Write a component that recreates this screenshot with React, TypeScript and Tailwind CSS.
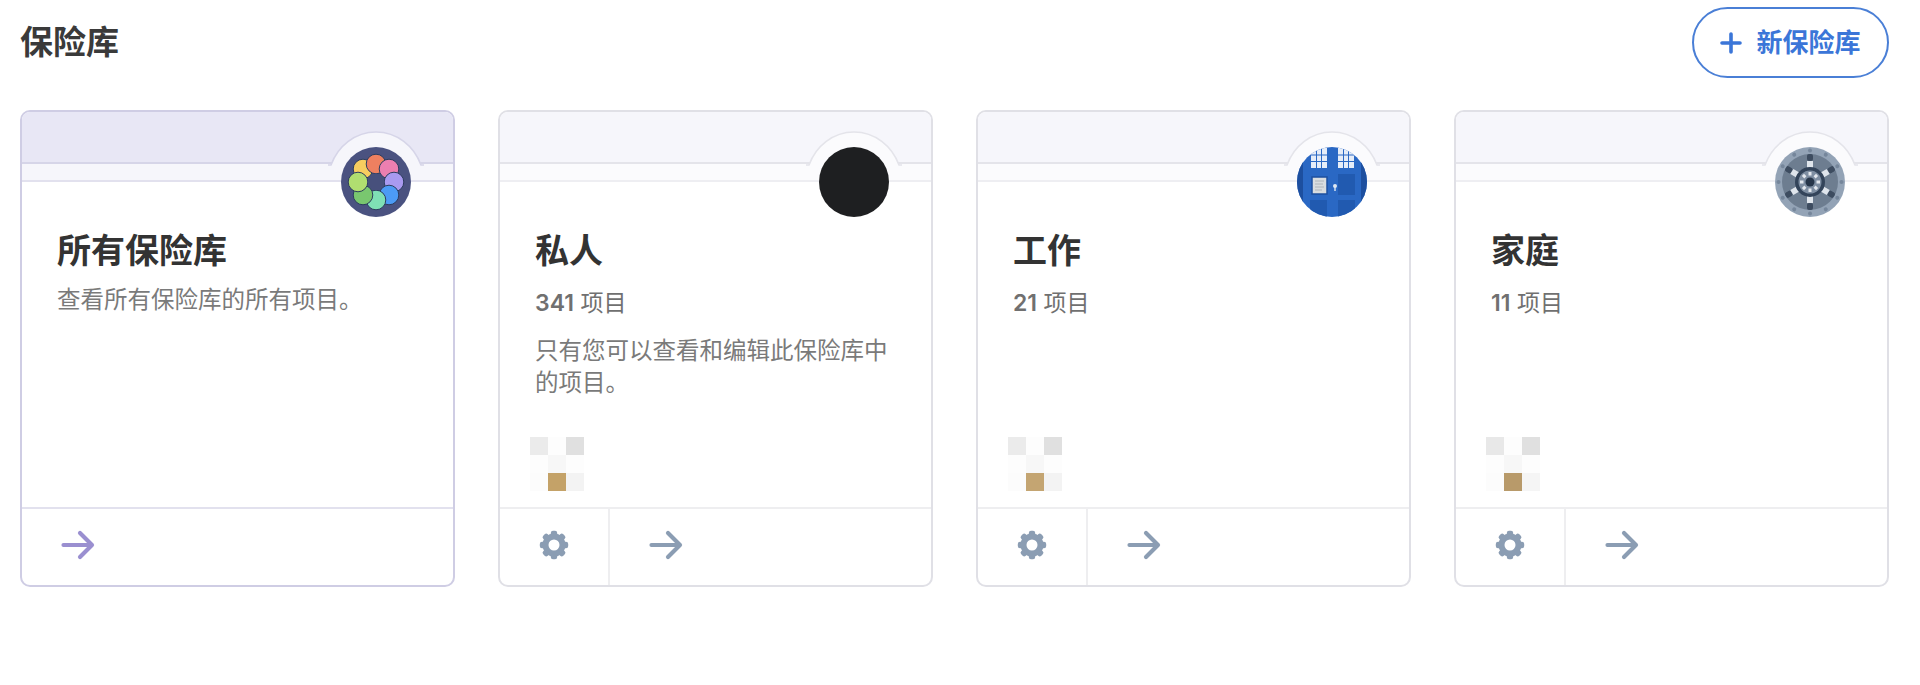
const Arrow = ({ className }: { className: string }) => (
  <svg viewBox="0 0 34 30" className={className} fill="none" stroke="currentColor" strokeWidth="4.2" strokeLinecap="round" strokeLinejoin="round">
    <path d="M2.500 15H31M19 3L31 15L19 27" />
  </svg>
);

const Gear = () => (
  <svg viewBox="0 0 30 30" className="h-[30px] w-[30px] text-[#8b9db3]" fill="currentColor">
    {[0, 45, 90, 135, 180, 225, 270, 315].map((a) => (
      <rect key={a} x="11.800" y="0.800" width="6.400" height="6" rx="2.200" transform={`rotate(${a} 15 15)`} />
    ))}
    <circle cx="15" cy="15" r="8.500" fill="none" stroke="currentColor" strokeWidth="6" />
  </svg>
);

const Arch = ({ fill, stroke }: { fill: string; stroke: string }) => (
  <svg viewBox="0 0 96 35" className="absolute left-[306px] top-[19px] h-[35px] w-[96px]">
    <path d="M0 34.500H3C10 15 27 1 48 1C69 1 86 15 93 34.500H96V35H0Z" fill={fill} stroke="none" />
    <path d="M0 34H3C10 15 27 1 48 1C69 1 86 15 93 34H96" fill="none" stroke={stroke} strokeWidth="1.600" />
  </svg>
);

const AllVaults = () => {
  const petals = [
    ["#f7cd5f", 22, 22],
    ["#ee8060", 35, 17],
    ["#ec7fb0", 48, 22],
    ["#a99af0", 53, 35],
    ["#4c9bf5", 48, 48],
    ["#7fe0b5", 35, 53],
    ["#79c76f", 22, 48],
    ["#b0de70", 17, 35],
  ] as const;
  return (
    <svg viewBox="0 0 70 70" className="h-full w-full">
      <circle cx="35" cy="35" r="35" fill="#4a5280" />
      {petals.map(([color, x, y]) => (
        <circle key={color} cx={x} cy={y} r="9.800" fill={color} stroke="#2c3c5e" strokeWidth="1" />
      ))}
      <circle cx="35" cy="35" r="8.500" fill="#47507c" />
    </svg>
  );
};

const Personal = () => (
  <svg viewBox="0 0 70 70" className="h-full w-full">
    <circle cx="35" cy="35" r="35" fill="#1e1f21" />
  </svg>
);

const Work = () => (
  <svg viewBox="0 0 70 70" className="h-full w-full">
    <defs>
      <clipPath id="doorClip">
        <circle cx="35" cy="35" r="35" />
      </clipPath>
    </defs>
    <g clipPath="url(#doorClip)">
      <rect width="70" height="70" fill="#2a68c4" />
      <rect x="0" width="6" height="70" fill="#1d4f9f" />
      <rect x="64" width="6" height="70" fill="#1d4f9f" />
      <rect x="14" y="1" width="16" height="20" fill="#e6edf8" />
      <rect x="41" y="1" width="16" height="20" fill="#e6edf8" />
      <path d="M19.500 1V21M24.500 1V21M14 8H30M14 14.500H30M46.500 1V21M51.500 1V21M41 8H57M41 14.500H57" stroke="#2a68c4" strokeWidth="1" />
      <rect x="15" y="30" width="15" height="17" fill="#d9dde0" stroke="#1d4f9f" strokeWidth="1.500" />
      <path d="M18 34H27M18 37H26M18 40H27M18 43H25" stroke="#a5adb3" strokeWidth="0.800" />
      <rect x="41" y="27" width="17" height="21" fill="#215ab0" />
      <rect x="13" y="53" width="17" height="17" fill="#215ab0" />
      <rect x="41" y="53" width="17" height="17" fill="#215ab0" />
      <circle cx="38" cy="39" r="2" fill="#dfe8f2" />
      <rect x="37.300" y="40" width="1.400" height="4" fill="#dfe8f2" />
    </g>
  </svg>
);

const Family = () => {
  const spokes = [0, 60, 120, 180, 240, 300];
  const dots = [0, 30, 60, 90, 120, 150, 180, 210, 240, 270, 300, 330];
  const inner = [0, 45, 90, 135, 180, 225, 270, 315];
  return (
    <svg viewBox="0 0 70 70" className="h-full w-full">
      <circle cx="35" cy="35" r="35" fill="#93a3b6" />
      {dots.map((a) => (
        <circle key={a} cx="35" cy="3.500" r="2" fill="#75869b" transform={`rotate(${a} 35 35)`} />
      ))}
      <circle cx="35" cy="35" r="28" fill="#6d7d90" />
      {spokes.map((a) => (
        <g key={a} transform={`rotate(${a} 35 35)`}>
          <rect x="32" y="7" width="6" height="7" rx="2" fill="#3d4c60" />
          <rect x="32" y="14" width="6" height="7" fill="#dfe5ec" />
        </g>
      ))}
      <circle cx="35" cy="35" r="15" fill="#33445a" />
      <circle cx="35" cy="35" r="11.500" fill="#7e8ea2" />
      {inner.map((a) => (
        <rect key={a} x="33.500" y="25" width="3" height="3.500" fill="#e3e8ee" transform={`rotate(${a} 35 35)`} />
      ))}
      <circle cx="35" cy="35" r="4.500" fill="#27364a" />
    </svg>
  );
};

type Vault = {
  name: string;
  count?: string;
  desc?: string;
  avatar: React.ReactNode;
  pixels?: string[];
};

const vaults: Vault[] = [
  { name: "所有保险库", desc: "查看所有保险库的所有项目。", avatar: <AllVaults /> },
  {
    name: "私人",
    count: "341",
    desc: "只有您可以查看和编辑此保险库中的项目。",
    avatar: <Personal />,
    pixels: ["#ebebeb", "#fdfdfd", "#e0e0e0", "#fdfdfd", "#f7f7f7", "#fdfdfd", "#fcfcfc", "#c4a268", "#f3f3f3"],
  },
  {
    name: "工作",
    count: "21",
    avatar: <Work />,
    pixels: ["#ebebeb", "#fdfdfd", "#e0e0e0", "#fdfdfd", "#f7f7f7", "#fdfdfd", "#fcfcfc", "#c4a572", "#f3f3f3"],
  },
  {
    name: "家庭",
    count: "11",
    avatar: <Family />,
    pixels: ["#e8e8e8", "#fdfdfd", "#e0e0e0", "#fdfdfd", "#f7f7f7", "#fdfdfd", "#fcfcfc", "#b89a6a", "#f5f5f5"],
  },
];

const VaultCard = ({ vault, all }: { vault: Vault; all: boolean }) => (
  <div className={`relative flex h-[477px] flex-col overflow-hidden rounded-[10px] border-2 bg-white ${all ? "border-[#cfcde4]" : "border-[#e0e0e6]"}`}>
    <div className={`h-[52px] shrink-0 border-b-2 ${all ? "border-[#d6d5e8] bg-[#e8e7f5]" : "border-[#e4e4ea] bg-[#f6f6fb]"}`} />
    <div className={`h-[18px] shrink-0 border-b-2 ${all ? "border-[#e2e1ee] bg-[#f6f6fb]" : "border-[#eeeef2] bg-[#fbfbfd]"}`} />
    <Arch fill={all ? "#f6f6fb" : "#fbfbfd"} stroke={all ? "#d6d5e8" : "#e4e4ea"} />
    <div className="absolute left-[319px] top-[35px] h-[70px] w-[70px]">{vault.avatar}</div>

    <div className="flex min-h-0 flex-1 flex-col px-[35px] pt-[46px]">
      <h2 className="text-[34px] leading-[46px] font-bold text-[#333333]">{vault.name}</h2>
      {vault.count && (
        <p className="mt-[13px] text-[23px] leading-[32px] text-[#707070]">
          <span className="font-semibold">{vault.count}</span> 项目
        </p>
      )}
      {vault.desc && (
        <p className={`text-[23.500px] leading-[32px] text-[#7a7a7a] ${vault.count ? "mt-[16px]" : "mt-[10px]"}`}>{vault.desc}</p>
      )}
      {vault.pixels && (
        <div className="mt-auto mb-[16px] -ml-[5px] grid w-[54px] grid-cols-3">
          {vault.pixels.map((color, i) => (
            <div key={i} className="h-[18px]" style={{ backgroundColor: color }} />
          ))}
        </div>
      )}
    </div>

    <div className={`flex h-[78px] shrink-0 border-t-2 pb-[4px] ${all ? "border-[#e2e1ee]" : "border-[#eeeef0]"}`}>
      {!all && (
        <div className="-mb-[4px] flex w-[110px] items-center justify-center border-r-2 border-[#eeeef0] pb-[4px]">
          <Gear />
        </div>
      )}
      <div className="flex items-center pl-[39px]">
        <Arrow className={`h-[30px] w-[34px] ${all ? "text-[#9a8fd0]" : "text-[#8b9db3]"}`} />
      </div>
    </div>
  </div>
);

export default function App() {
  return (
    <div className="h-[685px] w-full bg-white pr-[31px] pl-5 font-['Inter','Noto_Sans_CJK_SC',sans-serif]">
      <div className="flex h-[110px] items-start justify-between pt-[7px]">
        <h1 className="mt-[13px] text-[33px] leading-[44px] font-bold text-[#3a3a3a]">保险库</h1>
        <button className="flex h-[71px] w-[197px] items-center justify-center gap-[14px] rounded-full border-2 border-[#4a7fd6] text-[26px] font-semibold text-[#3b76d8]">
          <svg viewBox="0 0 22 22" className="h-[22px] w-[22px]" stroke="currentColor" strokeWidth="3.600" strokeLinecap="round">
            <path d="M2 11H20M11 2V20" />
          </svg>
          新保险库
        </button>
      </div>
      <div className="grid grid-cols-4 gap-[43px]">
        {vaults.map((v, i) => (
          <VaultCard key={v.name} vault={v} all={i === 0} />
        ))}
      </div>
    </div>
  );
}
